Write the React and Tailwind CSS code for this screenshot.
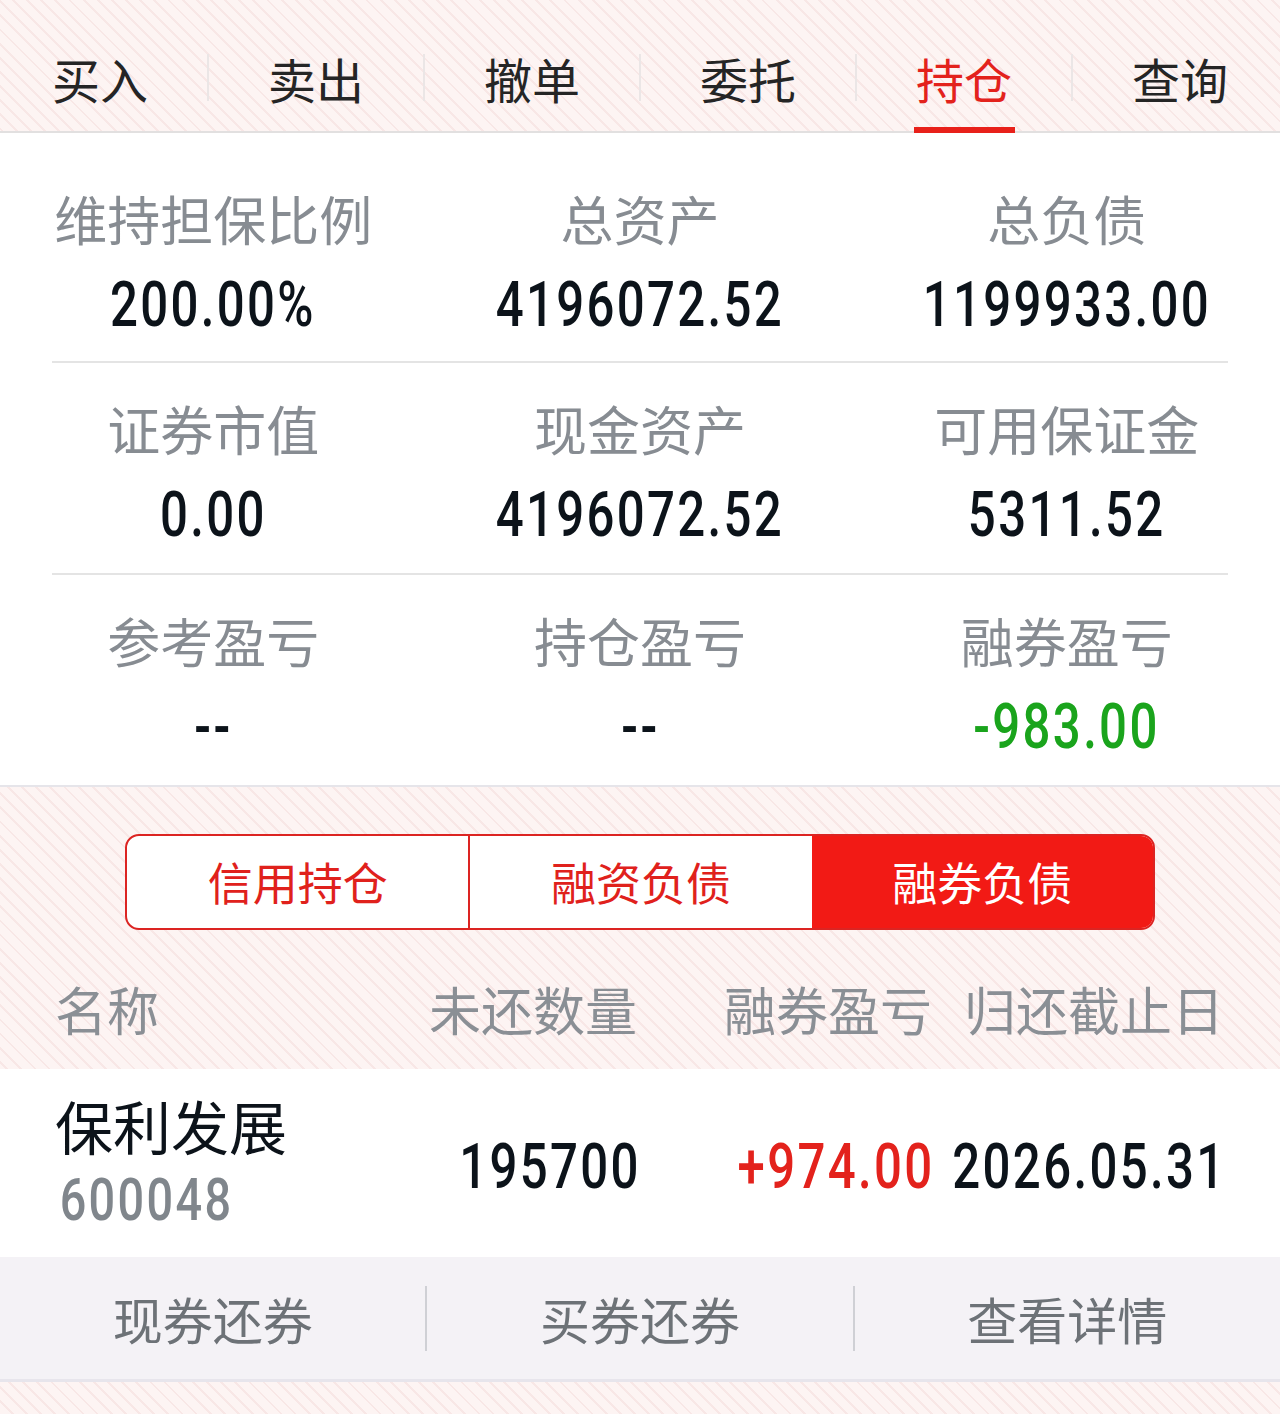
import React from 'react';

const CJK = "font-['Noto_Sans_CJK_SC','Noto_Sans',sans-serif]";
const NUM = "inline-block font-['Roboto','Liberation_Sans',sans-serif] font-medium tracking-[3px] scale-x-[0.78]";
const STRIPES =
  'bg-[repeating-linear-gradient(45deg,#fdf4f3_0px,#fdf4f3_8px,#f8e7e6_8px,#f8e7e6_10px)]';

const TABS = ['买入', '卖出', '撤单', '委托', '持仓', '查询'];

const STATS = [
  [
    { label: '维持担保比例', value: '200.00%' },
    { label: '总资产', value: '4196072.52' },
    { label: '总负债', value: '1199933.00' },
  ],
  [
    { label: '证券市值', value: '0.00' },
    { label: '现金资产', value: '4196072.52' },
    { label: '可用保证金', value: '5311.52' },
  ],
  [
    { label: '参考盈亏', value: '--' },
    { label: '持仓盈亏', value: '--' },
    { label: '融券盈亏', value: '-983.00', tone: 'green' },
  ],
];

const SEGMENTS = ['信用持仓', '融资负债', '融券负债'];
const ACTIONS = ['现券还券', '买券还券', '查看详情'];

export default function App() {
  return (
    <div className={`${CJK} w-[1280px] h-[1414px] overflow-hidden ${STRIPES}`}>
      {/* top tabs */}
      <div className="flex h-[133px] items-center justify-between border-b-2 border-[#e2e0e0] px-[52px] pt-[24px]">
        {TABS.map((tab, i) => (
          <React.Fragment key={tab}>
            {i > 0 && <div className="h-[47px] w-[2px] bg-[#ebe6e6]" />}
            <div className="relative flex h-full items-center">
              <span
                className={`text-[48px] leading-[48px] ${tab === '持仓' ? 'text-[#e3221c]' : 'text-[#252525]'}`}
              >
                {tab}
              </span>
              {tab === '持仓' && (
                <div className="absolute bottom-[-2px] left-[-2px] right-[-3px] h-[6px] bg-[#e8201a]" />
              )}
            </div>
          </React.Fragment>
        ))}
      </div>

      {/* account summary */}
      <div className="bg-white">
        {STATS.map((row, r) => (
          <div key={r}>
            {r > 0 && <div className="mx-[52px] h-[2px] bg-[#e4e4e4]" />}
            <div className={`grid grid-cols-3 ${r === 0 ? 'pt-[59px] pb-[25px]' : 'pt-[39px] pb-[27px]'}`}>
              {row.map((cell) => (
                <div key={cell.label} className="flex flex-col items-center">
                  <div className="text-[53px] leading-[52px] text-[#878c92]">{cell.label}</div>
                  <div
                    className={`${NUM} mt-[29px] text-[63px] leading-[63px] ${
                      cell.tone === 'green' ? 'text-[#1aa41c]' : 'text-[#0c131a]'
                    }`}
                  >
                    {cell.value}
                  </div>
                </div>
              ))}
            </div>
          </div>
        ))}
      </div>
      <div className="h-[2px] bg-[#e6e5ea]" />

      {/* segmented control */}
      <div className="pt-[47px] pl-[125px]">
        <div className="flex h-[96px] w-[1030px] overflow-hidden rounded-[14px] border-2 border-[#dc2422] bg-white">
          {SEGMENTS.map((seg, i) => (
            <div
              key={seg}
              className={`flex flex-1 items-center justify-center text-[45px] ${
                i === 2 ? 'bg-[#f21a15] text-white' : 'text-[#e0211c]'
              } ${i === 1 ? 'border-l-2 border-[#dc2422]' : ''}`}
            >
              {seg}
            </div>
          ))}
        </div>
      </div>

      {/* table header */}
      <div className="grid h-[139px] grid-cols-[330px_252px_295px_292px] items-center pl-[55px] pt-[18px] text-[52px] leading-[52px] text-[#8a8f95]">
        <div>名称</div>
        <div className="text-right">未还数量</div>
        <div className="text-right">融券盈亏</div>
        <div className="text-right">归还截止日</div>
      </div>

      {/* table row */}
      <div className="grid h-[188px] grid-cols-[330px_252px_295px_292px] items-center bg-white pl-[55px]">
        <div className="flex flex-col items-start">
          <div className="text-[58px] leading-[57px] text-[#0c131a]">保利发展</div>
          <div className={`${NUM} origin-left pl-[6px] mt-[16px] text-[60px] leading-[60px] text-[#80868c]`}>600048</div>
        </div>
        <div className="flex justify-end pt-[6px]">
          <span className={`${NUM} mr-[-4px] origin-right text-[63px] leading-[63px] text-[#0c131a]`}>195700</span>
        </div>
        <div className="flex justify-end pt-[6px]">
          <span className={`${NUM} mr-[-3px] origin-right text-[63px] leading-[63px] text-[#e3221c]`}>+974.00</span>
        </div>
        <div className="flex justify-end pt-[6px]">
          <span className={`${NUM} mr-[-2px] origin-right text-[63px] leading-[63px] text-[#0c131a]`}>2026.05.31</span>
        </div>
      </div>

      {/* row actions */}
      <div className="flex h-[125px] items-center border-b-[3px] border-[#e7e5ec] bg-[#f4f2f6]">
        {ACTIONS.map((a, i) => (
          <React.Fragment key={a}>
            {i > 0 && <div className="h-[65px] w-[2px] bg-[#cfd0d5]" />}
            <div className="flex flex-1 items-center justify-center text-[50px] leading-[50px] text-[#6d7277]">
              {a}
            </div>
          </React.Fragment>
        ))}
      </div>
    </div>
  );
}
